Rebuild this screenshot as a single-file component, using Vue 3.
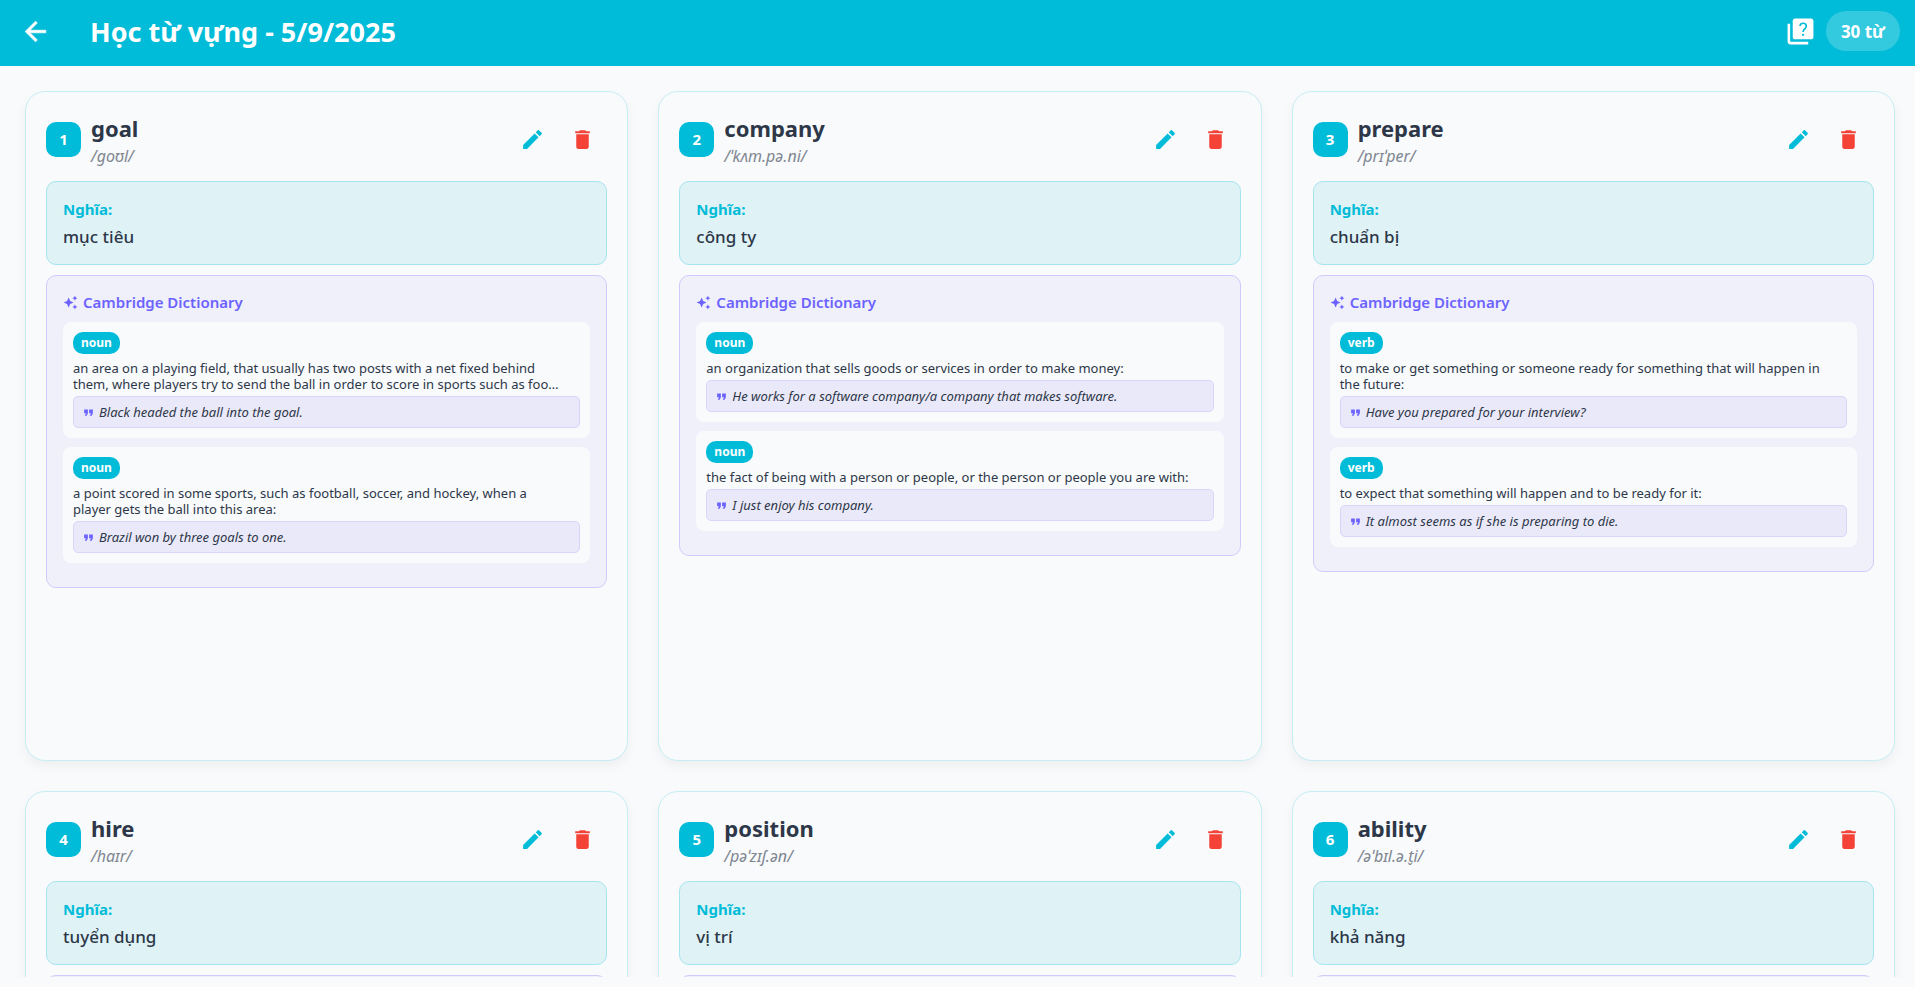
<script setup>
const words = [
  {
    word: 'goal',
    phonetic: '/ɡoʊl/',
    meaning: 'mục tiêu',
    definitions: [
      {
        type: 'noun',
        text: 'an area on a playing field, that usually has two posts with a net fixed behind them, where players try to send the ball in order to score in sports such as foo…',
        example: 'Black headed the ball into the goal.',
      },
      {
        type: 'noun',
        text: 'a point scored in some sports, such as football, soccer, and hockey, when a player gets the ball into this area:',
        example: 'Brazil won by three goals to one.',
      },
    ],
  },
  {
    word: 'company',
    phonetic: '/ˈkʌm.pə.ni/',
    meaning: 'công ty',
    definitions: [
      {
        type: 'noun',
        text: 'an organization that sells goods or services in order to make money:',
        example: 'He works for a software company/a company that makes software.',
      },
      {
        type: 'noun',
        text: 'the fact of being with a person or people, or the person or people you are with:',
        example: 'I just enjoy his company.',
      },
    ],
  },
  {
    word: 'prepare',
    phonetic: '/prɪˈper/',
    meaning: 'chuẩn bị',
    definitions: [
      {
        type: 'verb',
        text: 'to make or get something or someone ready for something that will happen in the future:',
        example: 'Have you prepared for your interview?',
      },
      {
        type: 'verb',
        text: 'to expect that something will happen and to be ready for it:',
        example: 'It almost seems as if she is preparing to die.',
      },
    ],
  },
  { word: 'hire', phonetic: '/haɪr/', meaning: 'tuyển dụng', definitions: [] },
  { word: 'position', phonetic: '/pəˈzɪʃ.ən/', meaning: 'vị trí', definitions: [] },
  { word: 'ability', phonetic: '/əˈbɪl.ə.t̬i/', meaning: 'khả năng', definitions: [] },
]
</script>

<template>
  <div class="page">
    <header class="bar">
      <button class="bar-button back" type="button" aria-label="Quay lại">
        <svg viewBox="0 0 24 24" aria-hidden="true">
          <path d="M20 11H7.83l5.59-5.59L12 4l-8 8 8 8 1.41-1.41L7.83 13H20v-2z" />
        </svg>
      </button>
      <h1>Học từ vựng - 5/9/2025</h1>
      <button class="bar-button quiz" type="button" aria-label="Kiểm tra">
        <svg viewBox="0 0 24 24" aria-hidden="true">
          <path d="M4 6H2v14c0 1.100.9 2 2 2h14v-2H4V6z" />
          <rect x="6" y="2" width="16" height="16" rx="2" />
          <path class="mark" d="M11.500 7.700c.3-1.300 1.200-2.100 2.500-2.100 1.500 0 2.500.9 2.500 2.300 0 1.900-2.500 2.200-2.500 4.400" />
          <circle class="dot" cx="14" cy="14.600" r="0.900" />
        </svg>
      </button>
      <span class="count">30 từ</span>
    </header>

    <main class="grid">
      <article v-for="(item, i) in words" :key="item.word" class="card">
        <div class="card-head">
          <span class="number">{{ i + 1 }}</span>
          <div class="names">
            <h2>{{ item.word }}</h2>
            <p class="phonetic">{{ item.phonetic }}</p>
          </div>
          <button class="action edit" type="button" :aria-label="'Sửa ' + item.word">
            <svg viewBox="0 0 24 24" aria-hidden="true">
              <path d="M3 17.250V21h3.750L17.810 9.940l-3.750-3.750L3 17.250zM20.710 7.040c.39-.39.390-1.020 0-1.410l-2.340-2.340c-.39-.39-1.020-.39-1.410 0l-1.830 1.830 3.750 3.750 1.830-1.830z" />
            </svg>
          </button>
          <button class="action remove" type="button" :aria-label="'Xóa ' + item.word">
            <svg viewBox="0 0 24 24" aria-hidden="true">
              <path d="M6 19c0 1.100.9 2 2 2h8c1.100 0 2-.9 2-2V7H6v12zM19 4h-3.500l-1-1h-5l-1 1H5v2h14V4z" />
            </svg>
          </button>
        </div>

        <section class="meaning">
          <h3>Nghĩa:</h3>
          <p>{{ item.meaning }}</p>
        </section>

        <section class="dictionary">
          <h3 v-if="item.definitions.length">
            <svg viewBox="0 0 24 24" aria-hidden="true">
              <path d="M19 9l1.250-2.750L23 5l-2.750-1.250L19 1l-1.250 2.750L15 5l2.750 1.250L19 9zM11.500 9.500L9 4 6.500 9.500 1 12l5.500 2.500L9 20l2.500-5.500L17 12l-5.500-2.500zM19 15l-1.250 2.750L15 19l2.750 1.250L19 23l1.250-2.750L23 19l-2.750-1.250L19 15z" />
            </svg>
            Cambridge Dictionary
          </h3>
          <div v-for="def in item.definitions" :key="def.text" class="definition">
            <span class="type">{{ def.type }}</span>
            <p class="text">{{ def.text }}</p>
            <div class="example">
              <svg viewBox="0 0 24 24" aria-hidden="true">
                <path d="M5 7h6v6l-2 4H6l2-4H5zM13 7h6v6l-2 4h-3l2-4h-3z" />
              </svg>
              <q>{{ def.example }}</q>
            </div>
          </div>
        </section>
      </article>
    </main>
  </div>
</template>

<style>
body {
  margin: 0;
  background: #f8fafc;
}
</style>

<style scoped>
.page {
  display: flex;
  flex-direction: column;
  height: 100vh;
  box-sizing: border-box;
  padding-bottom: 10px;
  background: #f8fafc;
  color: #2d3748;
  font-family: "Noto Sans", "Open Sans", sans-serif;
}

h1,
h2,
h3,
p {
  margin: 0;
}

button {
  display: flex;
  align-items: center;
  justify-content: center;
  flex: none;
  padding: 0;
  border: 0;
  background: none;
  cursor: pointer;
}

svg {
  display: block;
  flex: none;
  fill: currentColor;
}

.bar {
  display: flex;
  align-items: center;
  flex: none;
  box-sizing: border-box;
  padding: 0 15px 4px 10px;
  height: 66px;
  background: #00bcd8;
  color: #fff;
}

.bar-button {
  width: 50px;
  height: 50px;
  color: #fff;
}

.bar-button svg {
  width: 31px;
  height: 31px;
}

.back path {
  stroke: currentColor;
  stroke-width: 0.5;
}

.quiz .mark {
  fill: none;
  stroke: #00bcd8;
  stroke-width: 1.3;
}

.quiz .dot {
  fill: #00bcd8;
}

.bar h1 {
  flex: 1;
  padding: 2px 0 0 30px;
  font-size: 27px;
  line-height: 36px;
  font-weight: 700;
}

.count {
  box-sizing: border-box;
  padding: 2px 15px 0;
  border-radius: 20px;
  background: rgba(255, 255, 255, 0.2);
  font-size: 17px;
  line-height: 38px;
  font-weight: 700;
}

.grid {
  display: grid;
  grid-template-columns: repeat(3, minmax(0, 1fr));
  align-content: start;
  gap: 30px;
  flex: 1;
  min-height: 0;
  padding: 25px 20px 0 25px;
  overflow-y: auto;
  scrollbar-width: none;
}

.card {
  box-sizing: border-box;
  aspect-ratio: 0.9;
  padding: 20px;
  border: 1px solid #c6eef4;
  border-radius: 20px;
  background: #f8fafc;
  box-shadow: 0 5px 12px rgba(0, 0, 0, 0.05);
}

.card-head {
  display: flex;
  align-items: center;
  height: 54px;
  margin-bottom: 15px;
}

.number {
  flex: none;
  width: 35px;
  border-radius: 10px;
  background: #00bcd8;
  color: #fff;
  font-size: 15px;
  line-height: 35px;
  font-weight: 700;
  text-align: center;
}

.names {
  flex: 1;
  min-width: 0;
  padding: 2px 0 0 10px;
}

.names h2 {
  font-size: 22px;
  line-height: 32px;
  font-weight: 700;
}

.phonetic {
  color: #808690;
  font-size: 16px;
  line-height: 24px;
  font-style: italic;
}

.action {
  width: 50px;
  height: 50px;
}

.action svg {
  width: 25px;
  height: 25px;
}

.edit {
  color: #00bcd8;
}

.remove {
  color: #f44336;
}

.meaning,
.dictionary {
  padding: 15px 16px;
  border: 1px solid #a6e5ef;
  border-radius: 10px;
  background: #dff2f6;
}

.meaning {
  margin-bottom: 10px;
  padding-bottom: 13px;
}

.meaning h3 {
  margin-bottom: 2px;
  color: #00bcd8;
  font-size: 15px;
  line-height: 24px;
  font-weight: 700;
}

.meaning p {
  font-size: 17px;
  line-height: 28px;
  font-weight: 500;
}

.dictionary {
  border-color: #cfcbfb;
  background: #f0f0fa;
}

.dictionary h3 {
  display: flex;
  align-items: center;
  gap: 5px;
  margin-bottom: 9px;
  color: #6c63ff;
  font-size: 15px;
  line-height: 22px;
  font-weight: 600;
}

.dictionary h3 svg {
  width: 15px;
  height: 15px;
}

.definition {
  margin-bottom: 9px;
  padding: 10px;
  border-radius: 8px;
  background: #f8fafc;
}

.type {
  display: block;
  width: fit-content;
  margin-bottom: 6px;
  padding: 0 8px;
  border-radius: 10px;
  background: #00bcd8;
  color: #fff;
  font-size: 12px;
  line-height: 22px;
  font-weight: 700;
}

.text {
  margin-bottom: 4px;
  padding-right: 16px;
  font-size: 13px;
  line-height: 16px;
}

.example {
  display: flex;
  align-items: center;
  gap: 3px;
  padding: 0 7px;
  border: 1px solid #d8d5fb;
  border-radius: 5px;
  background: #eae9f9;
  font-size: 13px;
  line-height: 30px;
  font-style: italic;
}

.example svg {
  width: 15px;
  height: 15px;
  color: #6c63ff;
}

.example q {
  quotes: none;
}
</style>
